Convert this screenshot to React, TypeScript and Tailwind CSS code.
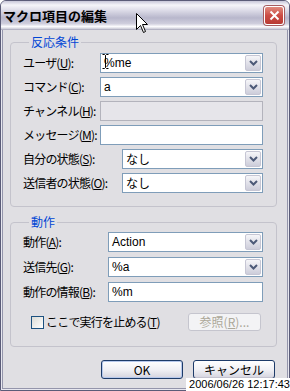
import type { ReactNode } from "react";

const jp = "font-['Noto_Sans_CJK_JP','Noto_Sans',sans-serif]";
const lat = "font-['Liberation_Sans','Noto_Sans_CJK_JP',sans-serif]";

function Chevron() {
  return (
    <svg width="9" height="6" viewBox="0 0 9 6">
      <path d="M1 1 L4.5 4.5 L8 1" fill="none" stroke="#4d5a78" strokeWidth="2" />
    </svg>
  );
}

function Combo({ value, latin = true }: { value: string; latin?: boolean }) {
  return (
    <div className="flex h-[20px] flex-1 border border-[#7f9db9] bg-white">
      <div className={`flex flex-1 items-center pl-[3px] text-[12px] text-black ${latin ? lat : jp}`}>{value}</div>
      <div className="m-px flex w-[16px] items-center justify-center rounded-[2px] border border-[#c6c6d4] bg-gradient-to-b from-[#f6f6f9] to-[#cdcdda]">
        <Chevron />
      </div>
    </div>
  );
}

function Field({ value = "", disabled = false }: { value?: string; disabled?: boolean }) {
  return (
    <div
      className={`flex h-[20px] flex-1 items-center border pl-[3px] text-[12px] ${lat} ${
        disabled ? "border-[#b3b3bc] bg-[#e6e5ea]" : "border-[#7f9db9] bg-white"
      }`}
    >
      {value}
    </div>
  );
}

function Row({ label, w, children }: { label: ReactNode; w: string; children: ReactNode }) {
  return (
    <div className="flex h-[20px] items-center">
      <div className={`${w} shrink-0 whitespace-nowrap text-[12px] leading-none tracking-[-0.8px] text-black ${jp}`}>{label}</div>
      {children}
    </div>
  );
}

function Group({ title, children, className }: { title: string; children: ReactNode; className: string }) {
  return (
    <fieldset className={`rounded-[4px] border border-[#c4c3cc] ${className}`}>
      <legend className={`ml-[6px] px-[2px] text-[12px] leading-[14px] text-[#0046d5] ${jp}`}>{title}</legend>
      {children}
    </fieldset>
  );
}

function XpButton({ children, def = false }: { children: ReactNode; def?: boolean }) {
  return (
    <div
      className={`flex h-[19px] w-[82px] items-center justify-center rounded-[3px] border border-[#1d3b69] bg-gradient-to-b from-[#ffffff] via-[#f1f1f5] to-[#d4d3de] text-[12px] text-black ${jp} ${
        def ? "shadow-[inset_0_0_0_1px_#b7c9ec]" : "shadow-[inset_0_-1px_0_#c4c3d0]"
      }`}
    >
      {children}
    </div>
  );
}

export default function App() {
  return (
    <div className="relative h-[391px] w-[290px] overflow-hidden bg-white">
      <div className="flex h-[391px] w-[290px] flex-col rounded-t-[6px] border border-[#5b5c78] bg-[#e0dfe3] shadow-[inset_0_0_0_1px_#e8e8f0,inset_0_0_0_2px_#9495ab]">
        {/* title bar */}
        <div className="flex h-[29px] shrink-0 items-center justify-between rounded-t-[5px] bg-[linear-gradient(to_bottom,#c8c7d9_0%,#f5f5f9_14%,#dddce8_32%,#b8b7cc_58%,#cfcedd_78%,#fbfbfd_88%,#dcdce5_94%,#a3a2b6_100%)] pl-[2px] pr-[5px]">
          <span className={`text-[13px] font-bold text-black ${jp}`}>マクロ項目の編集</span>
          <div className="flex h-[19px] w-[20px] items-center justify-center rounded-[3px] border border-white bg-gradient-to-b from-[#e08a7e] via-[#cc4c44] to-[#b83a33] shadow-[0_0_0_1px_#a55c60]">
            <svg width="11" height="11" viewBox="0 0 11 11">
              <path d="M1.5 1.5 L9.5 9.5 M9.5 1.5 L1.5 9.5" stroke="white" strokeWidth="2" />
            </svg>
          </div>
        </div>

        <div className="flex flex-col pl-[9px] pr-[12px]">
          <Group title="反応条件" className="mt-[5px] flex flex-col gap-[4px] pl-[12px] pr-[13px] pt-[4px] pb-[13px]">
            <Row label={<>ユーザ(<u>U</u>):</>} w="w-[77px]">
              <div className="relative flex flex-1">
                <Combo value="%me" />
                <svg className="absolute left-[2px] top-[1px]" width="7" height="15" viewBox="0 0 7 15">
                  <path d="M0.5 0.5 H2.5 L3.5 1.5 L4.5 0.5 H6.5 M3.5 1.5 V13.5 M0.5 14.5 H2.5 L3.5 13.5 L4.5 14.5 H6.5" fill="none" stroke="black" />
                </svg>
              </div>
            </Row>
            <Row label={<>コマンド(<u>C</u>):</>} w="w-[77px]">
              <Combo value="a" />
            </Row>
            <Row label={<>チャンネル(<u>H</u>):</>} w="w-[77px]">
              <Field disabled />
            </Row>
            <Row label={<>メッセージ(<u>M</u>):</>} w="w-[77px]">
              <Field />
            </Row>
            <Row label={<>自分の状態(<u>S</u>):</>} w="w-[99px]">
              <Combo value="なし" latin={false} />
            </Row>
            <Row label={<>送信者の状態(<u>O</u>):</>} w="w-[99px]">
              <Combo value="なし" latin={false} />
            </Row>
          </Group>

          <Group title="動作" className="mt-[8px] flex flex-col gap-[5px] pl-[12px] pr-[13px] pt-[3px] pb-[15px]">
            <Row label={<>動作(<u>A</u>):</>} w="w-[85px]">
              <Combo value="Action" />
            </Row>
            <Row label={<>送信先(<u>G</u>):</>} w="w-[85px]">
              <Combo value="%a" />
            </Row>
            <Row label={<>動作の情報(<u>B</u>):</>} w="w-[85px]">
              <Field value="%m" />
            </Row>
            <div className="mt-[6px] flex h-[18px] items-center justify-between pl-[8px] pr-[2px]">
              <div className="flex items-center gap-[2px]">
                <div className="h-[13px] w-[13px] border border-[#1c5180] bg-gradient-to-br from-[#dcdcd7] to-white" />
                <span className={`whitespace-nowrap text-[12px] tracking-[-0.8px] text-black ${jp}`}>
                  ここで実行を止める(<u>T</u>)
                </span>
              </div>
              <div className={`flex h-[18px] w-[73px] items-center justify-center rounded-[3px] border border-[#c5c5ce] bg-[#f3f3f5] text-[12px] text-[#aca899] ${jp}`}>
                参照(<u>R</u>)...
              </div>
            </div>
          </Group>

          <div className="mt-[13px] flex justify-end gap-[10px] pr-[2px]">
            <XpButton def>OK</XpButton>
            <XpButton>キャンセル</XpButton>
          </div>
        </div>
      </div>

      {/* timestamp overlay */}
      <div className={`absolute bottom-0 right-0 flex h-[13px] w-[104px] items-center justify-end bg-white text-[11px] leading-none text-black ${lat}`}>
        2006/06/26 12:17:43
      </div>

      {/* mouse pointer */}
      <svg className="absolute left-[136px] top-[13px]" width="13" height="21" viewBox="0 0 13 21">
        <path d="M0.5 0.5 V16.5 L4.5 12.5 L7.5 19.5 L9.5 18.5 L6.5 11.5 H11.5 Z" fill="white" stroke="black" />
      </svg>
    </div>
  );
}
